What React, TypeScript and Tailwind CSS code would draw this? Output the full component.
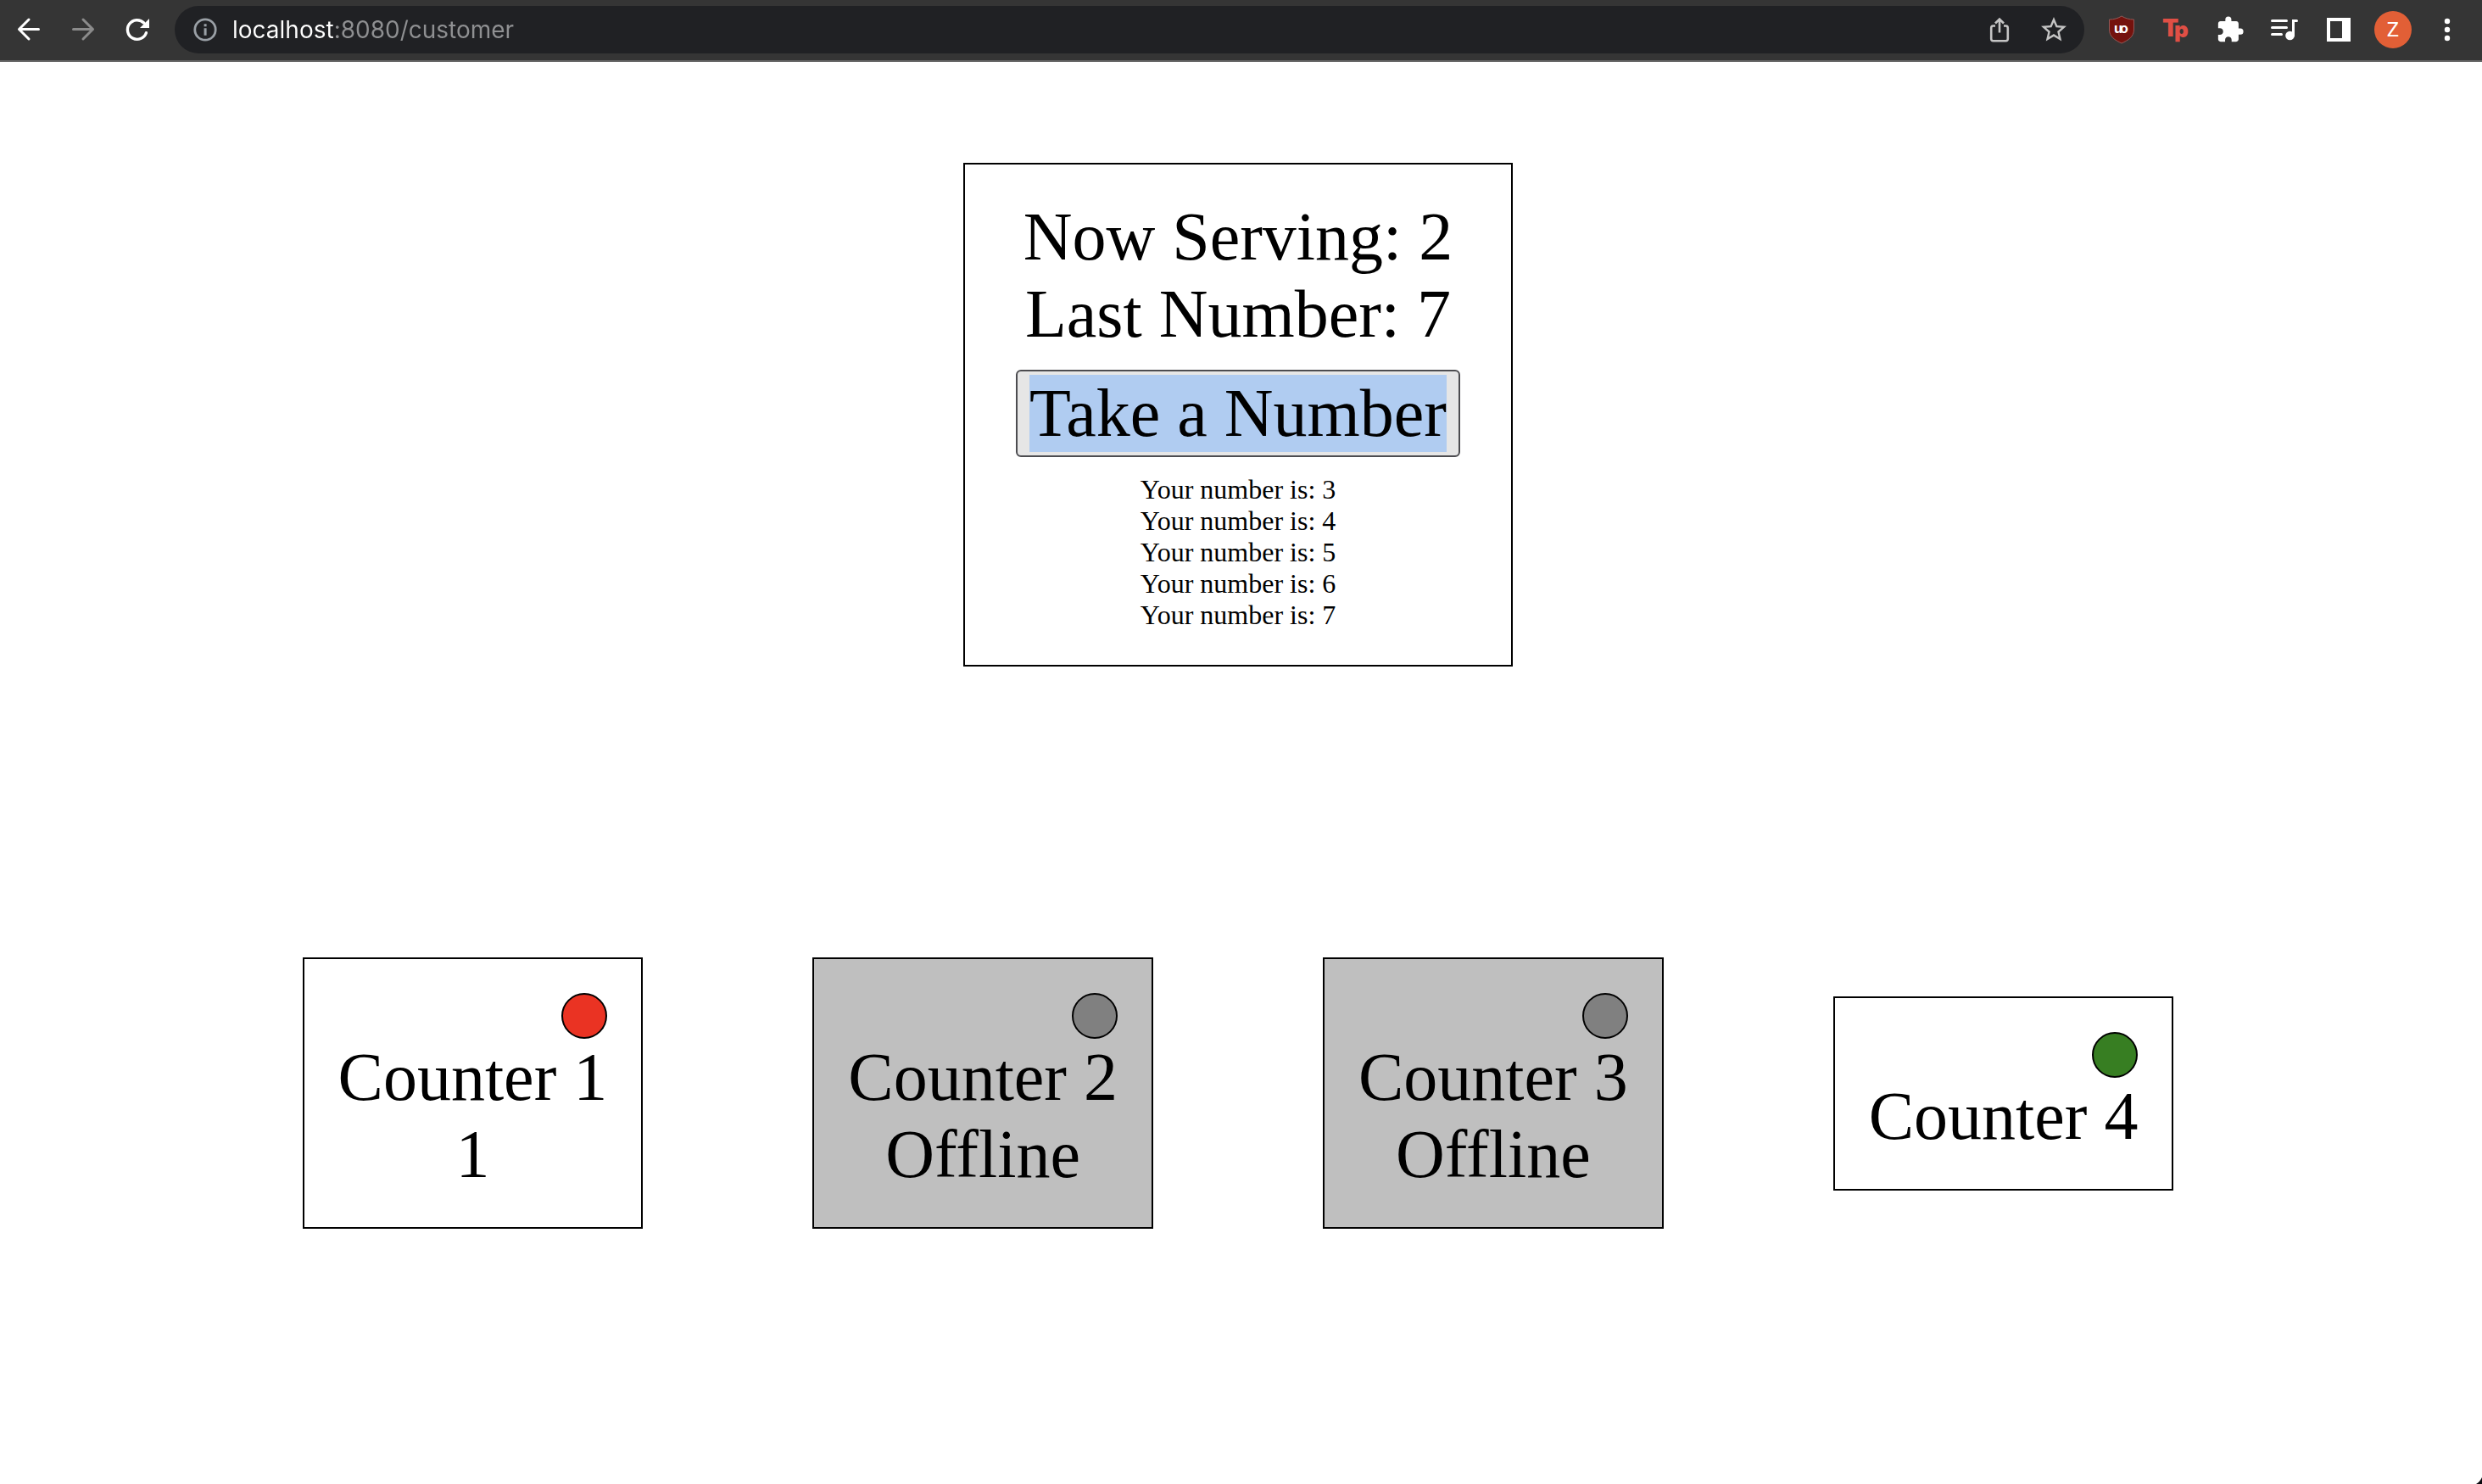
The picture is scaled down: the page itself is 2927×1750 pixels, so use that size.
import type { ReactNode } from "react";
import { MdExtension, MdStarOutline } from "react-icons/md";

function ToolbarButton({ label, children }: { label: string; children: ReactNode }) {
  return (
    <button type="button" aria-label={label} className="flex h-14 w-16 shrink-0 items-center justify-center text-white">
      {children}
    </button>
  );
}

function BackIcon() {
  return (
    <svg width="32" height="32" viewBox="0 0 32 32" fill="none" stroke="currentColor" strokeWidth="3" strokeLinecap="round" strokeLinejoin="round">
      <path d="M27.5 15.5H4.5M16 4 4.5 15.5 16 27" />
    </svg>
  );
}

function ForwardIcon() {
  return (
    <svg className="text-[#8b8b8b]" width="32" height="32" viewBox="0 0 32 32" fill="none" stroke="currentColor" strokeWidth="3" strokeLinecap="round" strokeLinejoin="round">
      <path d="M4.5 15.5h23M16 4 27.5 15.5 16 27" />
    </svg>
  );
}

function ReloadIcon() {
  return (
    <svg width="32" height="32" viewBox="0 0 32 32" fill="none">
      <path d="M26.4 19.7A11.3 11.3 0 1 1 23.700 8" stroke="currentColor" strokeWidth="3.4" strokeLinecap="round" />
      <path d="M30 3v11H19Z" fill="currentColor" />
    </svg>
  );
}

function InfoIcon() {
  return (
    <svg className="shrink-0 text-[#9aa0a6]" width="28" height="28" viewBox="0 0 28 28" fill="none">
      <circle cx="14" cy="14" r="12.2" stroke="currentColor" strokeWidth="2.800" />
      <path d="M12.6 7.2h3v3h-3zM12.6 12.2h3v8.6h-3z" fill="currentColor" />
    </svg>
  );
}

function ShareIcon() {
  return (
    <svg className="text-[#c4c4c4]" width="32" height="32" viewBox="0 0 32 32" fill="none" stroke="currentColor" strokeWidth="2.6">
      <path d="M11 11.500H8.500A2.500 2.500 0 0 0 6.200 14V27a2.500 2.500 0 0 0 2.300 2.300h15A2.500 2.500 0 0 0 25.800 27V14a2.500 2.500 0 0 0-2.300-2.500H21" />
      <path d="M16 19.500V4M11 8.500l5-5 5 5" />
    </svg>
  );
}

function ShieldIcon() {
  return (
    <svg width="32" height="34" viewBox="0 0 32 34" fill="#fff" fontFamily="Inter, sans-serif" fontSize="16" fontWeight="700">
      <path d="M16 1C12 3.500 7 5 1.500 5v12C1.500 25 8 29.500 16 33c8-3.500 14.500-8 14.500-16V5C25 5 20 3.500 16 1Z" fill="#74120d" stroke="#8f5a58" />
      <text x="7" y="21">u</text>
      <text x="14" y="21">o</text>
    </svg>
  );
}

function TpIcon() {
  return (
    <svg width="40" height="48" viewBox="0 0 40 48" fill="#e04f45" fontFamily="Inter, sans-serif" fontWeight="900">
      <text x="4" y="32" fontSize="28">T</text>
      <text x="18" y="33" fontSize="26">p</text>
    </svg>
  );
}

function QueueMusicIcon() {
  return (
    <svg width="32" height="32" viewBox="0 0 32 32" fill="none" stroke="currentColor" strokeWidth="3" strokeLinecap="round">
      <path d="M1.500 5.500h17M1.500 13.500h17M1.500 21.500h11M26.500 23V5.500h4" />
      <circle cx="22.500" cy="23" r="5.300" fill="currentColor" stroke="none" />
    </svg>
  );
}

function SidePanelIcon() {
  return (
    <svg width="28" height="28" viewBox="0 0 28 28">
      <path fillRule="evenodd" d="M0 0h28v28H0zM4 4v20h14V4z" fill="currentColor" />
    </svg>
  );
}

function MoreIcon() {
  return (
    <svg width="8" height="28" viewBox="0 0 8 28" fill="currentColor">
      <circle cx="4" cy="4" r="3.200" />
      <circle cx="4" cy="14" r="3.200" />
      <circle cx="4" cy="24" r="3.200" />
    </svg>
  );
}

function BrowserBar() {
  return (
    <header className="flex items-center gap-3 border-b-2 border-[#646464] bg-[#353535] pt-[7px] pr-[9px] pb-2 pl-0.5">
      <nav aria-label="Navigation" className="flex">
        <ToolbarButton label="Back"><BackIcon /></ToolbarButton>
        <ToolbarButton label="Forward"><ForwardIcon /></ToolbarButton>
        <ToolbarButton label="Reload"><ReloadIcon /></ToolbarButton>
      </nav>
      <div className="flex h-14 min-w-0 flex-1 items-center rounded-full bg-[#202124] pr-1 pl-[22px]">
        <InfoIcon />
        <input
          type="text"
          aria-label="Address"
          defaultValue="localhost:8080/customer"
          className="ml-[18px] min-w-0 flex-1 bg-[linear-gradient(to_right,#ffffff_119px,#8f9092_119px)] bg-clip-text font-['Inter',sans-serif] text-[28px] leading-10 text-transparent caret-white outline-none"
        />
        <ToolbarButton label="Share"><ShareIcon /></ToolbarButton>
        <ToolbarButton label="Bookmark"><MdStarOutline className="size-9 text-[#c4c4c4]" /></ToolbarButton>
      </div>
      <div className="flex">
        <ToolbarButton label="Ad blocker"><ShieldIcon /></ToolbarButton>
        <ToolbarButton label="Tp extension"><TpIcon /></ToolbarButton>
        <ToolbarButton label="Extensions"><MdExtension className="size-[34px]" /></ToolbarButton>
        <ToolbarButton label="Media controls"><QueueMusicIcon /></ToolbarButton>
        <ToolbarButton label="Side panel"><SidePanelIcon /></ToolbarButton>
        <ToolbarButton label="Profile">
          <span className="flex size-11 items-center justify-center rounded-full bg-[#e25f36] font-['Roboto',sans-serif] text-2xl">Z</span>
        </ToolbarButton>
        <ToolbarButton label="Menu"><MoreIcon /></ToolbarButton>
      </div>
    </header>
  );
}

const tickets = [3, 4, 5, 6, 7];

function TicketPanel() {
  return (
    <section className="flex flex-col items-center border-2 border-black px-[60px] py-10 text-[80px] leading-[91px]">
      <p>Now Serving: 2</p>
      <p>Last Number: 7</p>
      <button type="button" className="my-5 rounded-md border-2 border-[#4c4c50] bg-[#e6e6e6] px-3.5 py-1">
        <span className="block bg-[#b0ccf1]">Take a Number</span>
      </button>
      <ul className="text-center text-[32px] leading-[37px]">
        {tickets.map((n) => (
          <li key={n}>Your number is: {n}</li>
        ))}
      </ul>
    </section>
  );
}

interface Counter {
  name: string;
  status?: string;
  box: string;
  light: string;
}

const counters: Counter[] = [
  { name: "Counter 1", status: "1", box: "bg-white", light: "bg-[#ea3323]" },
  { name: "Counter 2", status: "Offline", box: "bg-[#bfbfbf]", light: "bg-[#808080]" },
  { name: "Counter 3", status: "Offline", box: "bg-[#bfbfbf]", light: "bg-[#808080]" },
  { name: "Counter 4", box: "bg-white", light: "bg-[#377e22]" },
];

function CounterCard({ name, status, box, light }: Counter) {
  return (
    <article className={`flex flex-col border-2 border-black p-10 text-center text-[80px] leading-[91px] ${box}`}>
      <span className={`size-[54px] self-end rounded-full border-2 border-black ${light}`} />
      <h2>{name}</h2>
      {status && <p>{status}</p>}
    </article>
  );
}

export default function App() {
  return (
    <div className="relative flex min-h-screen flex-col bg-white font-['Liberation_Serif',serif] text-black">
      <BrowserBar />
      <main className="flex flex-col items-center pt-[119px] pr-[7px]">
        <TicketPanel />
        <div className="mt-[343px] flex items-center justify-center gap-[200px]">
          {counters.map((c) => (
            <CounterCard key={c.name} {...c} />
          ))}
        </div>
      </main>
      <svg className="absolute right-0 bottom-0" width="8" height="8" viewBox="0 0 8 8" aria-hidden="true">
        <path d="M8 0Q6 5 1 8h7Z" fill="#0a0a0f" />
      </svg>
    </div>
  );
}
